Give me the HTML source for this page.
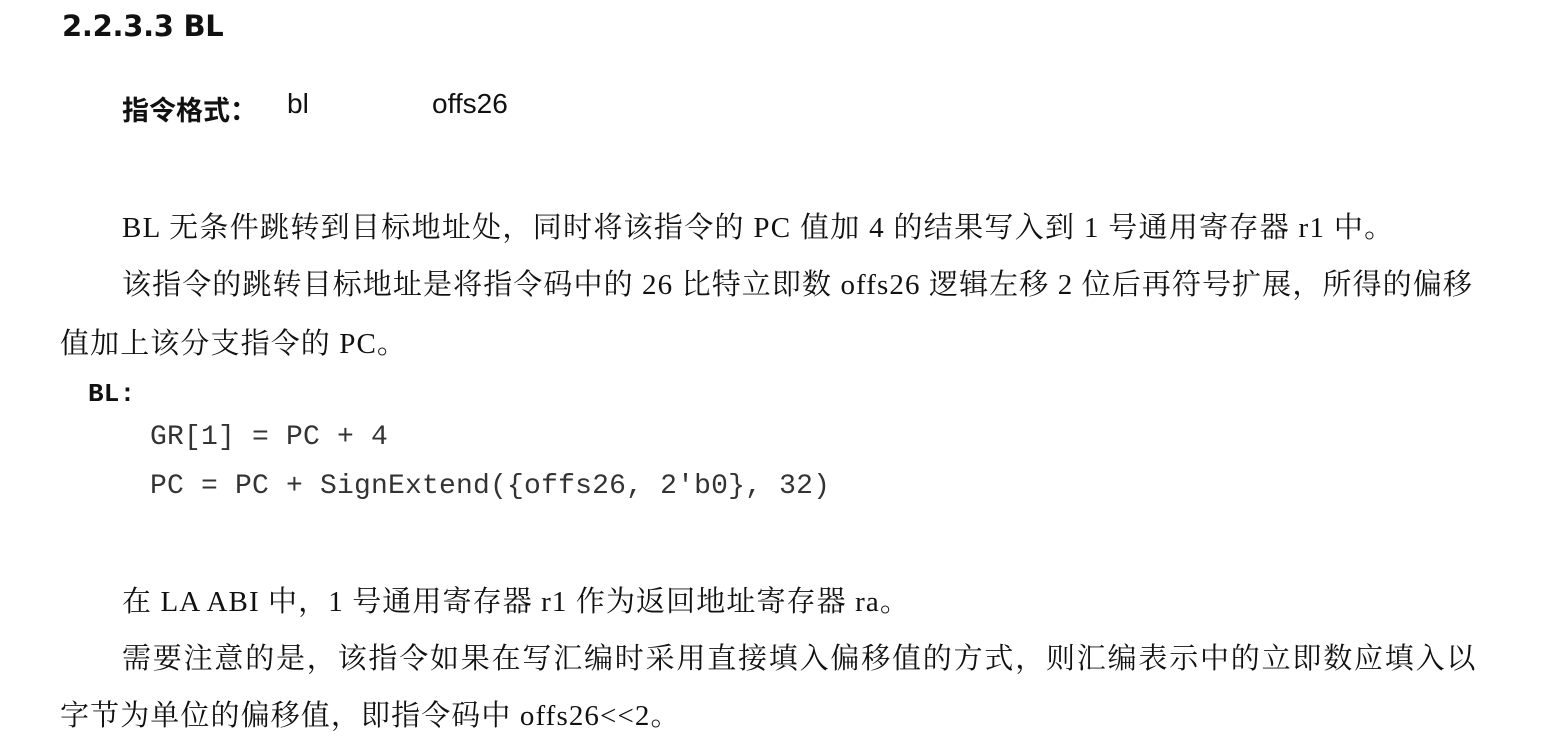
<!DOCTYPE html>
<html><head><meta charset="utf-8"><style>
body{margin:0;width:1547px;height:744px;background:#fff;position:relative;overflow:hidden;color:#111}
div{position:absolute;white-space:nowrap}
.h{font-family:"DejaVu Sans","Liberation Sans",sans-serif;font-weight:bold;font-size:29px;left:62px;top:9px;letter-spacing:-0.3px}
.f{font-family:"Liberation Sans","Noto Sans CJK SC",sans-serif;font-size:28px;top:88px}
.t{font-family:"Liberation Serif","Noto Serif CJK SC",serif;font-size:29px;letter-spacing:1.1px}
.c{font-family:"Liberation Mono",monospace;font-size:28px;color:#333;letter-spacing:0.2px}
</style></head><body>
<div class="h">2.2.3.3 BL</div>
<div class="f" style="left:122px;font-weight:bold;font-family:'Noto Sans CJK SC',sans-serif;font-size:27px;top:89px">指令格式：</div>
<div class="f" style="left:287px">bl</div>
<div class="f" style="left:432px">offs26</div>
<div class="t" style="left:122px;top:205px;letter-spacing:1.3px">BL 无条件跳转到目标地址处，同时将该指令的 PC 值加 4 的结果写入到 1 号通用寄存器 r1 中。</div>
<div class="t" style="left:122px;top:262px">该指令的跳转目标地址是将指令码中的 26 比特立即数 offs26 逻辑左移 2 位后再符号扩展，所得的偏移</div>
<div class="t" style="left:60px;top:321px">值加上该分支指令的 PC。</div>
<div class="c" style="left:88px;top:379px;font-weight:bold;font-size:26px;color:#111">BL:</div>
<div class="c" style="left:150px;top:422px">GR[1] = PC + 4</div>
<div class="c" style="left:150px;top:471px">PC = PC + SignExtend({offs26, 2'b0}, 32)</div>
<div class="t" style="left:122px;top:579px">在 LA ABI 中，1 号通用寄存器 r1 作为返回地址寄存器 ra。</div>
<div class="t" style="left:122px;top:636px;letter-spacing:1.8px">需要注意的是，该指令如果在写汇编时采用直接填入偏移值的方式，则汇编表示中的立即数应填入以</div>
<div class="t" style="left:60px;top:693px">字节为单位的偏移值，即指令码中 offs26&lt;&lt;2。</div>
</body></html>
